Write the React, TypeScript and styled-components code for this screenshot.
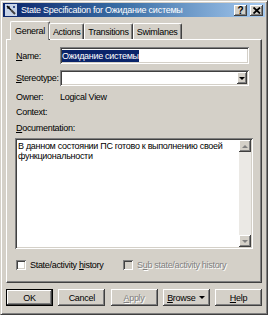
import { FC } from "react";
import styled, { createGlobalStyle, css } from "styled-components";

const GlobalStyle = createGlobalStyle`
    html, body {
        margin: 0;
        padding: 0;
        background: #d4d0c8;
    }
    body {
        font-family: "Liberation Sans", Arial, sans-serif;
        font-size: 9px;
        letter-spacing: -0.3px;
        color: #000;
    }
`;

const raised = css`
    box-shadow: inset -1px -1px 0 #404040, inset 1px 1px 0 #ffffff,
        inset -2px -2px 0 #808080;
`;

const sunken = css`
    box-shadow: inset 1px 1px 0 #808080, inset -1px -1px 0 #ffffff,
        inset 2px 2px 0 #404040, inset -2px -2px 0 #d4d0c8;
`;

const tabs = ["General", "Actions", "Transitions", "Swimlanes"];
const buttons = [
    { label: "OK", key: "", isDefault: true },
    { label: "Cancel", key: "" },
    { label: "Apply", key: "A", disabled: true },
    { label: "Browse", key: "B", menu: true },
    { label: "Help", key: "H" },
];

// underline the access key letter of a label
const Accel: FC<{ text: string; k?: string }> = ({ text, k }) => {
    if (!k) return <>{text}</>;
    const i = text.indexOf(k);
    if (i < 0) return <>{text}</>;
    return (
        <>
            {text.slice(0, i)}
            <u>{text[i]}</u>
            {text.slice(i + 1)}
        </>
    );
};

const App: FC = () => {
    return (
        <>
            <GlobalStyle />
            <StyledWindow>
                <StyledTitleBar>
                    <StyledAppIcon viewBox="0 0 12 12">
                        <rect width="12" height="12" fill="#c8d4e8" />
                        <path d="M2 2 L6 6" stroke="#000" strokeWidth="1.4" />
                        <path d="M4 2 L4 4 M2 4 L4 4" stroke="#000" strokeWidth="1" />
                        <path d="M6 6 L10 10" stroke="#404040" strokeWidth="2" />
                        <circle cx="9" cy="3" r="1" fill="#0a246a" />
                    </StyledAppIcon>
                    <StyledTitle>State Specification for Ожидание системы</StyledTitle>
                    <StyledCaptionButton>
                        <span>?</span>
                    </StyledCaptionButton>
                    <StyledCaptionButton $close>
                        <svg width="8" height="7" viewBox="0 0 8 7">
                            <path d="M0.5 0.5 L7 6.5 M7 0.5 L0.5 6.5" stroke="#000" strokeWidth="1.8" />
                        </svg>
                    </StyledCaptionButton>
                </StyledTitleBar>

                <StyledBody>
                    <StyledTabStrip>
                        {tabs.map((t, i) => (
                            <StyledTab key={t} $active={i === 0}>
                                {t}
                            </StyledTab>
                        ))}
                    </StyledTabStrip>

                    <StyledPanel>
                        <StyledFieldRow>
                            <StyledLabel>
                                <Accel text="Name:" k="N" />
                            </StyledLabel>
                            <StyledInput>
                                <StyledSelection>Ожидание системы</StyledSelection>
                            </StyledInput>
                        </StyledFieldRow>

                        <StyledFieldRow $top={6}>
                            <StyledLabel>
                                <Accel text="Stereotype:" k="S" />
                            </StyledLabel>
                            <StyledCombo>
                                <StyledComboButton>
                                    <StyledArrow $down />
                                </StyledComboButton>
                            </StyledCombo>
                        </StyledFieldRow>

                        <StyledTextRow $top={5}>
                            <StyledLabel>Owner:</StyledLabel>
                            <StyledValue>Logical View</StyledValue>
                        </StyledTextRow>
                        <StyledTextRow $top={3}>
                            <StyledLabel>Context:</StyledLabel>
                        </StyledTextRow>
                        <StyledTextRow $top={4}>
                            <StyledLabel>
                                <Accel text="Documentation:" k="D" />
                            </StyledLabel>
                        </StyledTextRow>

                        <StyledMemo>
                            <StyledMemoText>
                                В данном состоянии ПС готово к выполнению своей функциональности
                            </StyledMemoText>
                            <StyledScrollBar>
                                <StyledScrollButton>
                                    <StyledArrow $up $gray />
                                </StyledScrollButton>
                                <StyledScrollTrack />
                                <StyledScrollButton>
                                    <StyledArrow $down $gray />
                                </StyledScrollButton>
                            </StyledScrollBar>
                        </StyledMemo>

                        <StyledCheckRow>
                            <StyledCheckItem>
                                <StyledCheckBox />
                                <span>
                                    State/activity <u>h</u>istory
                                </span>
                            </StyledCheckItem>
                            <StyledCheckItem $disabled>
                                <StyledCheckBox $disabled />
                                <span>
                                    S<u>u</u>b state/activity history
                                </span>
                            </StyledCheckItem>
                        </StyledCheckRow>
                    </StyledPanel>

                    <StyledButtonRow>
                        {buttons.map((b) => (
                            <StyledButton
                                key={b.label}
                                $default={b.isDefault}
                                $disabled={b.disabled}
                            >
                                <span>
                                    <Accel text={b.label} k={b.key} />
                                </span>
                                {b.menu && <StyledArrow $down />}
                            </StyledButton>
                        ))}
                    </StyledButtonRow>
                </StyledBody>
            </StyledWindow>
        </>
    );
};

export default App;

const StyledWindow = styled.div`
    width: 268px;
    height: 315px;
    box-sizing: border-box;
    background: #d4d0c8;
    border: 1px solid;
    border-color: #d4d0c8 #404040 #404040 #d4d0c8;
    box-shadow: inset 1px 1px 0 #ffffff, inset -1px -1px 0 #808080;
    padding: 2px;
    display: flex;
    flex-direction: column;
`;

const StyledTitleBar = styled.div`
    height: 14px;
    display: flex;
    align-items: center;
    gap: 2px;
    padding: 0 2px 0 2px;
    background: linear-gradient(to right, #0a246a 0%, #3a6ea5 45%, #a6caf0 100%);
    color: #fff;
`;

const StyledAppIcon = styled.svg`
    width: 12px;
    height: 12px;
    flex: none;
`;

const StyledTitle = styled.div`
    flex: 1;
    padding-left: 2px;
    font-size: 9px;
    letter-spacing: -0.25px;
    white-space: nowrap;
`;

const StyledCaptionButton = styled.div<{ $close?: boolean }>`
    width: 13px;
    height: 11px;
    box-sizing: border-box;
    background: #d4d0c8;
    ${raised};
    display: flex;
    align-items: center;
    justify-content: center;
    margin-left: ${({ $close }) => ($close ? "1px" : "0")};
    color: #000;
    font-weight: bold;
    font-size: 10px;
    letter-spacing: 0;
    line-height: 11px;
`;

const StyledBody = styled.div`
    flex: 1;
    display: flex;
    flex-direction: column;
    padding: 4px 3px 0 3px;
`;

const StyledTabStrip = styled.div`
    display: flex;
    align-items: flex-end;
    height: 18px;
    padding-left: 6px;
    position: relative;
    z-index: 1;
`;

const StyledTab = styled.div<{ $active?: boolean }>`
    box-sizing: border-box;
    height: ${({ $active }) => ($active ? "19px" : "16px")};
    padding: ${({ $active }) => ($active ? "4px 4px 0 4px" : "3px 3px 0 3px")};
    margin: ${({ $active }) => ($active ? "0 -1px -1px -2px" : "0")};
    background: #d4d0c8;
    border-left: 1px solid #ffffff;
    border-top: 1px solid #ffffff;
    border-right: 1px solid #404040;
    border-top-left-radius: 2px;
    border-top-right-radius: 2px;
    box-shadow: inset -1px 0 0 #808080;
    white-space: nowrap;
`;

const StyledPanel = styled.div`
    box-sizing: border-box;
    height: 244px;
    padding: 7px 9px 0 9px;
    border-top: 1px solid #ffffff;
    border-left: 1px solid #ffffff;
    border-right: 1px solid #404040;
    border-bottom: 1px solid #404040;
    box-shadow: inset -1px -1px 0 #808080;
    display: flex;
    flex-direction: column;
`;

const StyledFieldRow = styled.div<{ $top?: number }>`
    display: flex;
    align-items: center;
    margin-top: ${({ $top }) => $top ?? 0}px;
`;

const StyledTextRow = styled.div<{ $top?: number }>`
    display: flex;
    align-items: center;
    height: 12px;
    margin-top: ${({ $top }) => $top ?? 0}px;
`;

const StyledLabel = styled.div`
    width: 44px;
    flex: none;
    white-space: nowrap;
`;

const StyledValue = styled.span`
    color: #000;
`;

const StyledInput = styled.div`
    width: 189px;
    height: 17px;
    box-sizing: border-box;
    background: #fff;
    ${sunken};
    display: flex;
    align-items: center;
    padding-left: 2px;
`;

const StyledSelection = styled.span`
    background: #0a246a;
    color: #fff;
    padding: 1px 0;
`;

const StyledCombo = styled.div`
    width: 189px;
    height: 16px;
    box-sizing: border-box;
    background: #fff;
    ${sunken};
    display: flex;
    justify-content: flex-end;
    padding: 2px;
`;

const StyledComboButton = styled.div`
    width: 10px;
    background: #d4d0c8;
    ${raised};
    display: flex;
    align-items: center;
    justify-content: center;
`;

const StyledArrow = styled.span<{ $up?: boolean; $down?: boolean; $gray?: boolean }>`
    width: 0;
    height: 0;
    border-left: 3px solid transparent;
    border-right: 3px solid transparent;
    ${({ $up, $gray }) =>
        $up && `border-bottom: 3px solid ${$gray ? "#808080" : "#000"};`}
    ${({ $down, $gray }) =>
        $down && `border-top: 3px solid ${$gray ? "#808080" : "#000"};`}
`;

const StyledMemo = styled.div`
    margin-top: 4px;
    margin-left: -1px;
    width: 238px;
    height: 111px;
    box-sizing: border-box;
    background: #fff;
    ${sunken};
    padding: 2px;
    display: flex;
`;

const StyledMemoText = styled.div`
    flex: 1;
    padding: 1px 1px 0 1px;
    line-height: 10px;
`;

const StyledScrollBar = styled.div`
    width: 12px;
    display: flex;
    flex-direction: column;
`;

const StyledScrollButton = styled.div`
    height: 12px;
    background: #d4d0c8;
    ${raised};
    display: flex;
    align-items: center;
    justify-content: center;
`;

const StyledScrollTrack = styled.div`
    flex: 1;
    background: #ebe9e5;
`;

const StyledCheckRow = styled.div`
    display: flex;
    align-items: center;
    margin-top: 11px;
    height: 10px;
`;

const StyledCheckItem = styled.div<{ $disabled?: boolean }>`
    display: flex;
    align-items: center;
    gap: 4px;
    width: 107px;
    white-space: nowrap;
    color: ${({ $disabled }) => ($disabled ? "#808080" : "#000")};
    text-shadow: ${({ $disabled }) => ($disabled ? "1px 1px 0 #ffffff" : "none")};
`;

const StyledCheckBox = styled.div<{ $disabled?: boolean }>`
    width: 10px;
    height: 10px;
    box-sizing: border-box;
    flex: none;
    background: ${({ $disabled }) => ($disabled ? "#d4d0c8" : "#fff")};
    ${sunken};
`;

const StyledButtonRow = styled.div`
    display: flex;
    justify-content: space-between;
    margin-top: 6px;
`;

const StyledButton = styled.div<{ $default?: boolean; $disabled?: boolean }>`
    width: 47px;
    height: 17px;
    box-sizing: border-box;
    display: flex;
    align-items: center;
    justify-content: center;
    gap: 4px;
    background: #d4d0c8;
    ${({ $default }) =>
        $default
            ? css`
                  border: 1px solid #000;
                  box-shadow: inset -1px -1px 0 #404040, inset 1px 1px 0 #ffffff,
                      inset -2px -2px 0 #808080;
              `
            : raised};
    color: ${({ $disabled }) => ($disabled ? "#808080" : "#000")};
    text-shadow: ${({ $disabled }) => ($disabled ? "1px 1px 0 #ffffff" : "none")};
`;
